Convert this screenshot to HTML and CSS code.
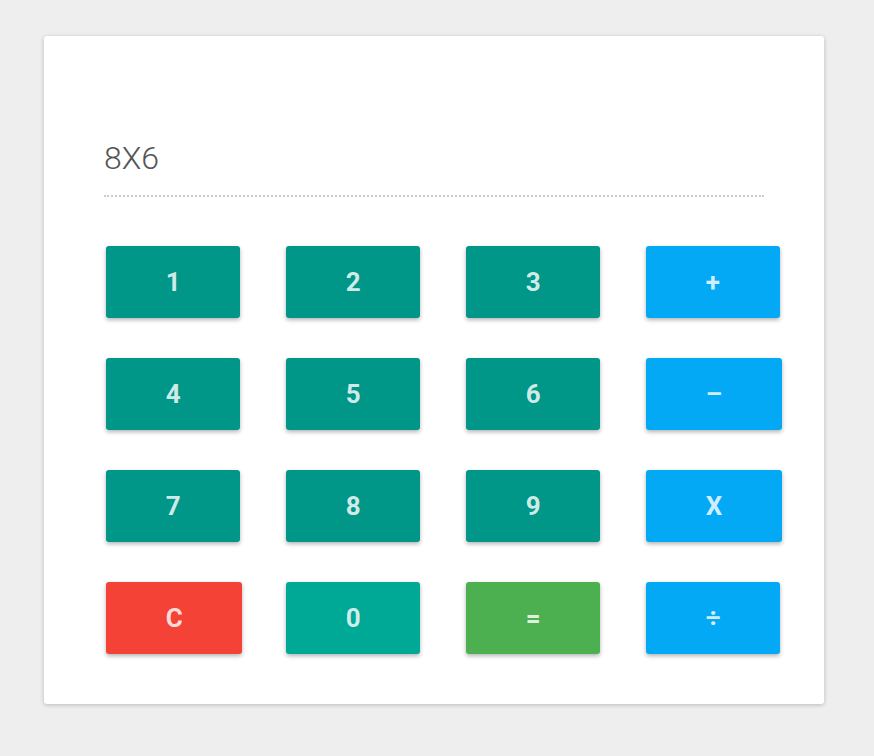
FILE: index.html
```html
<!DOCTYPE html>
<html>
<head>
<meta charset="utf-8">
<link rel="stylesheet" href="styles.css">
</head>
<body>
<div class="card">
  <div class="display">8X6</div>
  <div class="keys">
    <button class="key num">1</button>
    <button class="key num">2</button>
    <button class="key num">3</button>
    <button class="key op">+</button>
    <button class="key num">4</button>
    <button class="key num">5</button>
    <button class="key num">6</button>
    <button class="key op">&ndash;</button>
    <button class="key num">7</button>
    <button class="key num">8</button>
    <button class="key num">9</button>
    <button class="key op">X</button>
    <button class="key clear">C</button>
    <button class="key zero">0</button>
    <button class="key eq">=</button>
    <button class="key op">&divide;</button>
  </div>
</div>
</body>
</html>
```
FILE: styles.css
```css
html, body {
  margin: 0;
  padding: 0;
}
body {
  background: #eeeeee;
  font-family: Roboto, "Liberation Sans", sans-serif;
  padding: 36px 50px 52px 44px;
}
.card {
  width: 660px;
  background: #ffffff;
  border-radius: 3px;
  box-shadow: 0 1px 4px rgba(0, 0, 0, 0.22);
  padding: 100px 60px 50px 60px;
}
.display {
  font-size: 32px;
  font-weight: 300;
  color: #555555;
  line-height: 44px;
  height: 44px;
  padding-bottom: 15px;
  border-bottom: 2px dotted #cccccc;
  margin-bottom: 49px;
}
.keys {
  display: grid;
  grid-template-columns: 180px 180px 180px auto;
  row-gap: 40px;
  margin-left: 2px;
  justify-items: start;
}
.key {
  height: 72px;
  padding: 0 59.7px;
  border: none;
  border-radius: 3px;
  font-family: Roboto, "Liberation Sans", sans-serif;
  font-size: 26px;
  font-weight: 700;
  color: rgba(255, 255, 255, 0.82);
  box-shadow: 0 2px 4px rgba(0, 0, 0, 0.3);
  cursor: pointer;
}
.num { background: #009688; }
.op { background: #03a9f4; }
.clear { background: #f44336; }
.zero { background: #00a896; }
.eq { background: #4caf50; }
```
